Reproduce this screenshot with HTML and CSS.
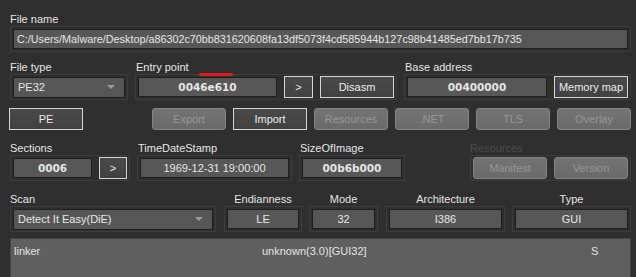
FILE: index.html
```html
<!DOCTYPE html>
<html>
<head>
    <title>Detect It Easy</title>
    <link rel="stylesheet" href="styles.css">
</head>
<body>
    <div class="app">
        <div class="label">File name</div>
        <div class="frame">
            <div class="field path">C:/Users/Malware/Desktop/a86302c70bb831620608fa13df5073f4cd585944b127c98b41485ed7bb17b735</div>
        </div>

        <div class="row info-row">
            <div class="group w-filetype">
                <div class="label">File type</div>
                <div class="frame">
                    <div class="combo">PE32<span class="arrow"></span></div>
                </div>
            </div>
            <div class="group w-entry">
                <div class="label">Entry point</div>
                <div class="frame">
                    <div class="field hex f-entry">0046e610</div>
                    <button class="btn on b-arrow">&gt;</button>
                    <button class="btn on b-disasm">Disasm</button>
                </div>
                <span class="marker"></span>
            </div>
            <div class="group w-base">
                <div class="label">Base address</div>
                <div class="frame">
                    <div class="field hex f-base">00400000</div>
                    <button class="btn on b-memmap">Memory map</button>
                </div>
            </div>
        </div>

        <div class="row button-row">
            <button class="btn on b-pe">PE</button>
            <div class="tools">
                <button class="btn off">Export</button>
                <button class="btn on">Import</button>
                <button class="btn off">Resources</button>
                <button class="btn off">.NET</button>
                <button class="btn off">TLS</button>
                <button class="btn off">Overlay</button>
            </div>
        </div>

        <div class="row header-row">
            <div class="group w-sections">
                <div class="label">Sections</div>
                <div class="frame">
                    <div class="field hex f-sections">0006</div>
                    <button class="btn on b-arrow">&gt;</button>
                </div>
            </div>
            <div class="group w-time">
                <div class="label">TimeDateStamp</div>
                <div class="frame">
                    <div class="field center f-time">1969-12-31 19:00:00</div>
                </div>
            </div>
            <div class="group w-size">
                <div class="label">SizeOfImage</div>
                <div class="frame">
                    <div class="field hex f-size">00b6b000</div>
                </div>
            </div>
            <div class="group w-res">
                <div class="label dim">Resources</div>
                <div class="frame">
                    <button class="btn off">Manifest</button>
                    <button class="btn off">Version</button>
                </div>
            </div>
        </div>

        <div class="row scan-row">
            <div class="group w-scan">
                <div class="label">Scan</div>
                <div class="frame">
                    <div class="combo">Detect It Easy(DiE)<span class="arrow"></span></div>
                </div>
            </div>
            <div class="group w-endian">
                <div class="label center">Endianness</div>
                <div class="frame">
                    <div class="field center">LE</div>
                </div>
            </div>
            <div class="group w-mode">
                <div class="label center">Mode</div>
                <div class="frame">
                    <div class="field center">32</div>
                </div>
            </div>
            <div class="group w-arch">
                <div class="label center">Architecture</div>
                <div class="frame">
                    <div class="field center">I386</div>
                </div>
            </div>
            <div class="group w-type">
                <div class="label center">Type</div>
                <div class="frame">
                    <div class="field center">GUI</div>
                </div>
            </div>
        </div>

        <div class="results">
            <div class="result-line">
                <span class="r-type">linker</span>
                <span class="r-name">unknown(3.0)[GUI32]</span>
                <span class="r-flag">S</span>
            </div>
        </div>
    </div>
</body>
</html>
```

FILE: styles.css
```css
html, body {
    margin: 0;
    height: 100%;
    overflow: hidden;
}
body {
    background-color: #2f2f2f;
    font-family: "Liberation Sans", Arial, sans-serif;
    font-size: 10.5px;
    color: #e6e6e6;
}
.app {
    padding: 12px 5px 0 10px;
    display: flex;
    flex-direction: column;
}
.label {
    height: 14px;
    line-height: 14px;
    font-size: 11px;
    white-space: nowrap;
}
.label.center {
    text-align: center;
}
.label.dim {
    color: #4c4c4c;
}
.frame {
    display: flex;
    align-items: center;
    gap: 7px;
    height: 26px;
    box-sizing: border-box;
    border: 1px solid #3d3d3d;
    padding: 1px 2px;
}
.field {
    flex: 1;
    height: 20px;
    box-sizing: border-box;
    border: 1px solid #1e1e1e;
    background-color: #575757;
    display: flex;
    align-items: center;
    padding: 0 4px;
    white-space: nowrap;
    overflow: hidden;
    font-size: 11px;
}
.field.center {
    justify-content: center;
}
.field.hex {
    justify-content: center;
    font-family: "DejaVu Sans", Verdana, sans-serif;
    font-weight: bold;
    font-size: 10.5px;
}
.field.path {
    padding-left: 3px;
    font-size: 10.8px;
}
.f-entry { flex: 0 0 139px; }
.f-base { flex: 0 0 140px; }
.f-sections { flex: 0 0 79px; }

.combo {
    flex: 1;
    height: 21px;
    box-sizing: border-box;
    border: 1px solid #1e1e1e;
    border-radius: 2px;
    background-color: #565656;
    display: flex;
    align-items: center;
    padding: 0 4px;
    font-size: 11px;
}
.arrow {
    margin-left: auto;
    margin-right: 5px;
    width: 0;
    height: 0;
    border-left: 4px solid transparent;
    border-right: 4px solid transparent;
    border-top: 4px solid #9a9a9a;
}

.btn {
    height: 22px;
    box-sizing: border-box;
    width: 74px;
    font-family: "Liberation Sans", Arial, sans-serif;
    font-size: 11px;
    padding: 0;
    cursor: pointer;
    white-space: nowrap;
}
.btn.on {
    background: linear-gradient(#4a4a4a, #414141);
    border: 1px solid #d6d6d6;
    color: #ececec;
}
.btn.off {
    background: linear-gradient(#747474, #6a6a6a);
    border: 1px solid #848484;
    border-radius: 3px;
    color: #979797;
}
.b-arrow { width: 29px; }
.b-disasm { width: 74px; }
.b-memmap { width: 75px; }

.row {
    display: flex;
}
.info-row {
    margin-top: 8px;
    gap: 7px;
}
.group {
    position: relative;
    display: flex;
    flex-direction: column;
}
.w-filetype { width: 118px; }
.w-entry { width: 262px; }
.w-base { width: 227px; }
.w-entry .label,
.w-base .label { padding-left: 1px; }

.marker {
    position: absolute;
    left: 64px;
    top: 13px;
    width: 34px;
    height: 3px;
    border-radius: 2px;
    background-color: #e31e1e;
}

.button-row {
    margin-top: 8px;
    margin-left: -1px;
    justify-content: space-between;
    width: 622px;
}
.tools {
    display: flex;
    gap: 7px;
}
.b-pe { width: 74px; }

.header-row {
    margin-top: 11px;
    gap: 7px;
}
.w-sections { width: 120px; }
.w-time { width: 155px; }
.w-size { width: 106px; }
.w-res { width: 161px; margin-left: 58px; }
.w-time .label,
.w-size .label { padding-left: 1px; }

.scan-row {
    margin-top: 11px;
    gap: 7px;
}
.w-scan { width: 206px; margin-right: 1px; }
.w-endian { width: 78px; }
.w-mode { width: 69px; }
.w-arch { width: 119px; margin-left: 1px; }
.w-type { width: 119px; }

.results {
    margin-top: 6px;
    width: 621px;
    height: 39px;
    box-sizing: border-box;
    background-color: #5f5f5f;
    border: 1px solid #454545;
    border-bottom: none;
}
.result-line {
    display: flex;
    height: 16px;
    align-items: center;
    margin-top: 4px;
    font-size: 11px;
}
.r-type { width: 248px; padding-left: 3px; }
.r-name { width: 329px; }
```
